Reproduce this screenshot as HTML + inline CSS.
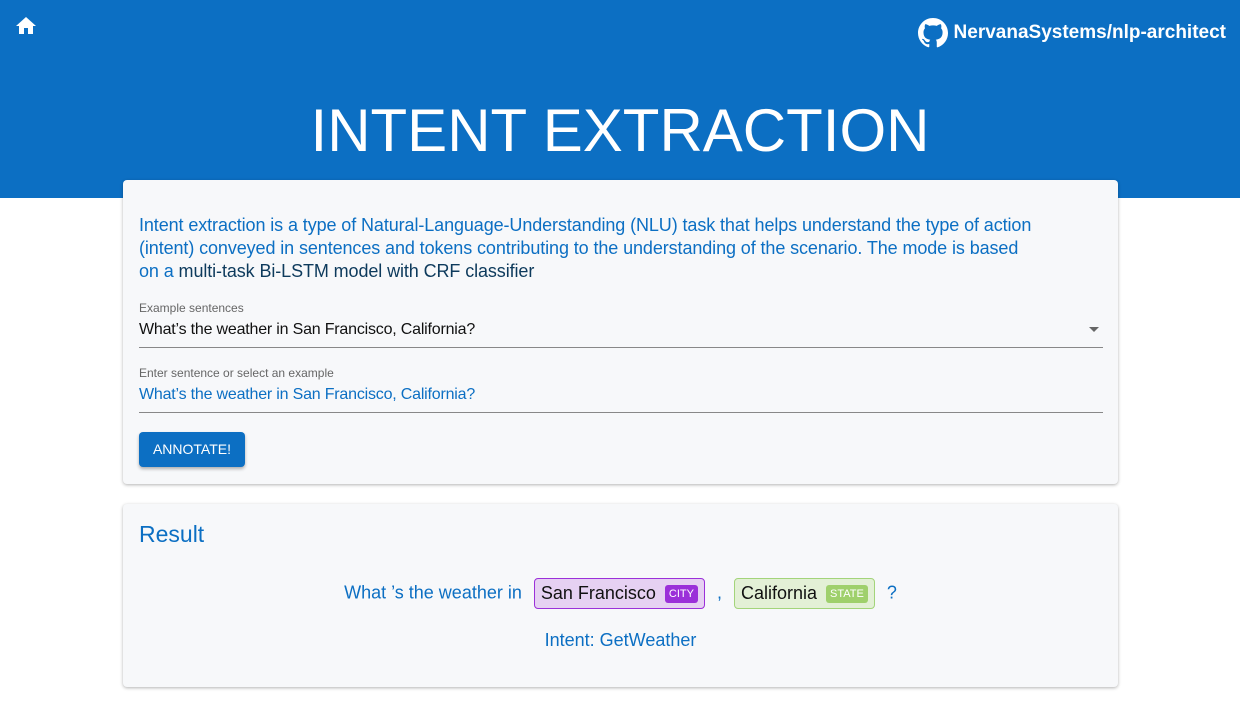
<!DOCTYPE html>
<html><head><meta charset="utf-8"><style>
*{margin:0;padding:0;box-sizing:border-box}
body{width:1240px;height:702px;background:#fff;font-family:"Liberation Sans",sans-serif;position:relative;overflow:hidden}
.hdr{position:absolute;left:0;top:0;width:1240px;height:198px;background:#0c6fc3}
.title{position:absolute;top:96px;left:0;width:1240px;text-align:center;color:#fff;font-size:60px}
.gh{position:absolute;right:14px;top:18px;color:#fff;font-size:19px;font-weight:bold;display:flex;align-items:center;gap:6px}
.card{position:absolute;left:123px;width:995px;background:#f7f8fa;border-radius:4px;box-shadow:0 1px 3px rgba(0,0,0,.3)}
.desc{position:absolute;left:16px;top:34px;width:965px;font-size:18px;line-height:23px;color:#0c6fc3;letter-spacing:-0.1px;white-space:nowrap}
.desc span{color:#0d3a5c}
.lbl{position:absolute;left:16px;font-size:12px;color:#666}
.val{position:absolute;left:16px;font-size:16px;width:964px;padding-bottom:8px;border-bottom:1px solid #888;letter-spacing:-0.2px}
.btn{position:absolute;left:16px;top:252px;width:106px;height:35px;background:#0c6fc3;color:#fff;font-size:14px;border-radius:4px;box-shadow:0 2px 3px rgba(0,0,0,.3);text-align:center;line-height:35px}
.res{position:absolute;left:16px;top:17px;font-size:23px;color:#0c6fc3}
.line{position:absolute;top:74px;left:0;width:995px;text-align:center;font-size:18px;color:#0c6fc3}
.ent{display:inline-block;border-radius:4px;padding:4px 6px;color:#111;margin:0 7px;vertical-align:middle}
.tag{display:inline-block;font-size:11px;color:#fff;border-radius:3px;padding:3px 4px;vertical-align:middle;margin-left:9px}
</style></head><body>
<div class="hdr">
<svg style="position:absolute;left:16px;top:17px" width="20" height="18" viewBox="0 0 20 18"><path d="M8 17v-6h4v6h5V9h3L10 0 0 9h3v8z" fill="#fff"/></svg>
<div class="gh"><svg width="30" height="30" viewBox="0 0 16 16"><path fill="#fff" d="M8 0C3.58 0 0 3.58 0 8c0 3.54 2.29 6.53 5.47 7.59.4.07.55-.17.55-.38v-1.33c-2.23.48-2.7-1.07-2.7-1.07-.36-.92-.89-1.17-.89-1.17-.73-.5.06-.49.06-.49.8.06 1.23.83 1.23.83.71 1.23 1.87.87 2.33.66.07-.52.28-.87.51-1.07-1.78-.2-3.64-.89-3.64-3.95 0-.87.31-1.59.82-2.15-.08-.2-.36-1.02.08-2.12 0 0 .67-.21 2.2.82.64-.18 1.32-.27 2-.27.68 0 1.36.09 2 .27 1.53-1.04 2.2-.82 2.2-.82.44 1.1.16 1.92.08 2.12.51.56.82 1.27.82 2.15 0 3.07-1.87 3.75-3.65 3.95.29.25.54.73.54 1.48v2.2c0 .21.15.46.55.38A8.01 8.01 0 0016 8c0-4.42-3.58-8-8-8z"/></svg>NervanaSystems/nlp-architect</div>
<div class="title">INTENT EXTRACTION</div>
</div>
<div class="card" style="top:180px;height:304px">
<div class="desc">Intent extraction is a type of Natural-Language-Understanding (NLU) task that helps understand the type of action<br>(intent) conveyed in sentences and tokens contributing to the understanding of the scenario. The mode is based<br>on a <span>multi-task Bi-LSTM model with CRF classifier</span></div>
<div class="lbl" style="top:121px">Example sentences</div>
<div class="val" style="top:141px;color:#111">What’s the weather in San Francisco, California?<span style="position:absolute;right:4px;top:6px;border:5px solid transparent;border-top-color:#666"></span></div>
<div class="lbl" style="top:186px">Enter sentence or select an example</div>
<div class="val" style="top:206px;color:#0c6fc3">What’s the weather in San Francisco, California?</div>
<div class="btn">ANNOTATE!</div>
</div>
<div class="card" style="top:504px;height:183px">
<div class="res">Result</div>
<div class="line">What ’s the weather in <span class="ent" style="background:#e6d1f2;border:1px solid #9b30d9">San Francisco<span class="tag" style="background:#9b30d9">CITY</span></span> , <span class="ent" style="background:#e3f0d6;border:1px solid #a3d47a">California<span class="tag" style="background:#9fd06c">STATE</span></span> ?</div>
<div style="position:absolute;top:126px;width:995px;text-align:center;font-size:18px;color:#0c6fc3">Intent: GetWeather</div>
</div>
</body></html>
